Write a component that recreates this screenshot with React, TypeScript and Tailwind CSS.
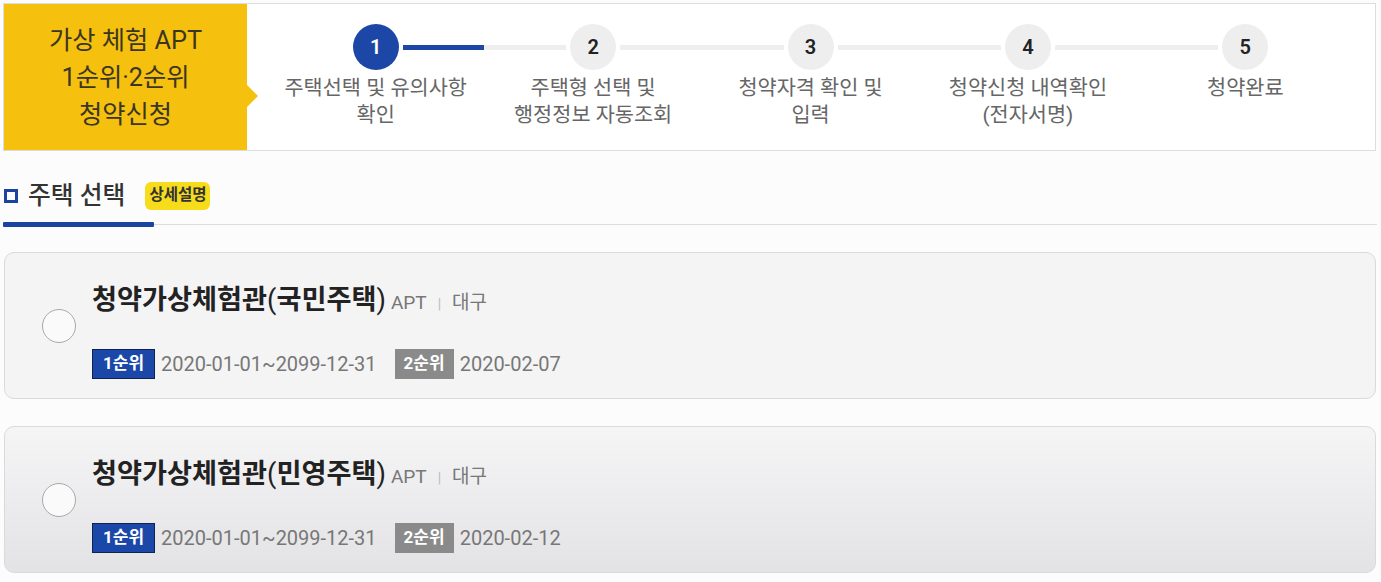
import React from "react";

const steps = [
  { no: 1, label: ["주택선택 및 유의사항", "확인"] },
  { no: 2, label: ["주택형 선택 및", "행정정보 자동조회"] },
  { no: 3, label: ["청약자격 확인 및", "입력"] },
  { no: 4, label: ["청약신청 내역확인", "(전자서명)"] },
  { no: 5, label: ["청약완료"] },
];

const houses = [
  { kind: "국민주택", second: "2020-02-07", grad: false },
  { kind: "민영주택", second: "2020-02-12", grad: true },
];

const Step = ({ no, label, idx }: { no: number; label: string[]; idx: number }) => {
  const active = idx === 0;
  return (
    <div className="flex-1 flex flex-col items-center">
      <div className="flex items-center w-full">
        <div className={`flex-1 h-[5px] ${idx === 0 ? "" : "bg-[#eeeeee]"}`} />
        <div
          className={`mx-[4px] w-[46px] h-[46px] rounded-full flex items-center justify-center text-[20px] font-semibold ${
            active ? "bg-[#1c47a6] text-white" : "bg-[#eeeeee] text-[#222]"
          }`}
        >
          {no}
        </div>
        <div
          className={`flex-1 h-[5px] ${
            idx === 4 ? "" : active ? "bg-[#1c47a6]" : "bg-[#eeeeee]"
          }`}
        />
      </div>
      <div className="mt-[5px] text-[20.8px] leading-[27px] text-[#666] text-center whitespace-nowrap">
        {label.map((l) => (
          <div key={l}>{l}</div>
        ))}
      </div>
    </div>
  );
};

const HouseCard = ({ kind, second, grad }: { kind: string; second: string; grad: boolean }) => (
  <div
    className={`flex items-center rounded-[10px] border border-[#dadada] ${
      grad ? "bg-gradient-to-b from-[#f5f5f6] via-[#ececee] to-[#e3e3e5]" : "bg-[#f4f4f5]"
    }`}
  >
    <div className="ml-[37px] w-[34px] h-[34px] rounded-full border-[1.5px] border-[#a8a8a8] bg-[#fafafa] shrink-0" />
    <div className="ml-[16px] pt-[31px] pb-[19px]">
      <div className="flex items-baseline h-[32px]">
        <span className="text-[27.2px] font-bold text-[#222] leading-[32px]">
          청약가상체험관<span className="font-normal">(</span>
          {kind}
          <span className="font-normal">)</span>
        </span>
        <span className="ml-[5px] text-[19px] text-[#777]">APT</span>
        <span className="mx-[11px] text-[14px] text-[#bbb]">|</span>
        <span className="text-[19px] text-[#777]">대구</span>
      </div>
      <div className="mt-[33px] flex items-center h-[30px]">
        <span className="h-[30px] px-[10px] flex items-center bg-[#1b48a8] border border-[#0e2350] text-white text-[17px] font-bold">
          1순위
        </span>
        <span className="ml-[6px] text-[20px] text-[#777]">2020-01-01~2099-12-31</span>
        <span className="ml-[18px] h-[30px] px-[9px] flex items-center bg-[#8a8a8a] text-white text-[17px] font-bold">
          2순위
        </span>
        <span className="ml-[6px] text-[20px] text-[#777]">{second}</span>
      </div>
    </div>
  </div>
);

export default function App() {
  return (
    <div
      className="w-[1381px] h-[582px] overflow-hidden bg-[#fcfcfc] pt-[3px] px-[4px]"
      style={{ fontFamily: "Roboto, 'Noto Sans CJK KR', sans-serif" }}
    >
      {/* 상단 단계 표시 */}
      <div className="flex h-[148px] border border-[#dddddd] bg-white -ml-[1px] mr-[1px]">
        <div className="relative w-[243px] shrink-0 bg-[#f5c10e] flex flex-col items-center justify-center text-[25.3px] leading-[37px] text-[#3b3622]">
          <div>가상 체험 APT</div>
          <div>1순위·2순위</div>
          <div>청약신청</div>
          <div className="absolute right-[-11px] top-[81px] w-0 h-0 border-y-[11px] border-y-transparent border-l-[11px] border-l-[#f5c10e]" />
        </div>
        <div className="flex-1 flex pl-[20px] pr-[21px] pt-[20px]">
          {steps.map((s, i) => (
            <Step key={s.no} no={s.no} label={s.label} idx={i} />
          ))}
        </div>
      </div>

      {/* 주택 선택 */}
      <div className="mt-[28px] flex items-center h-[34px]">
        <div className="w-[14px] h-[14px] border-[3px] border-[#1b44a0]" />
        <span className="ml-[10px] text-[24.8px] font-medium text-[#333]">주택 선택</span>
        <span className="ml-[20px] px-[4px] h-[28px] flex items-center rounded-[6px] bg-[#f7dc1c] text-[15.5px] font-bold text-[#333]">
          상세설명
        </span>
      </div>
      <div className="mt-[9px] relative h-[5px] -ml-[1px]">
        <div className="absolute left-0 right-0 top-[2px] h-px bg-[#dddddd]" />
        <div className="absolute left-0 top-0 w-[151px] h-[5px] bg-[#1b44a0] rounded-[1px]" />
      </div>

      <div className="mt-[25px] flex flex-col gap-[27px] mr-[1px]">
        {houses.map((h) => (
          <HouseCard key={h.kind} kind={h.kind} second={h.second} grad={h.grad} />
        ))}
      </div>
    </div>
  );
}
